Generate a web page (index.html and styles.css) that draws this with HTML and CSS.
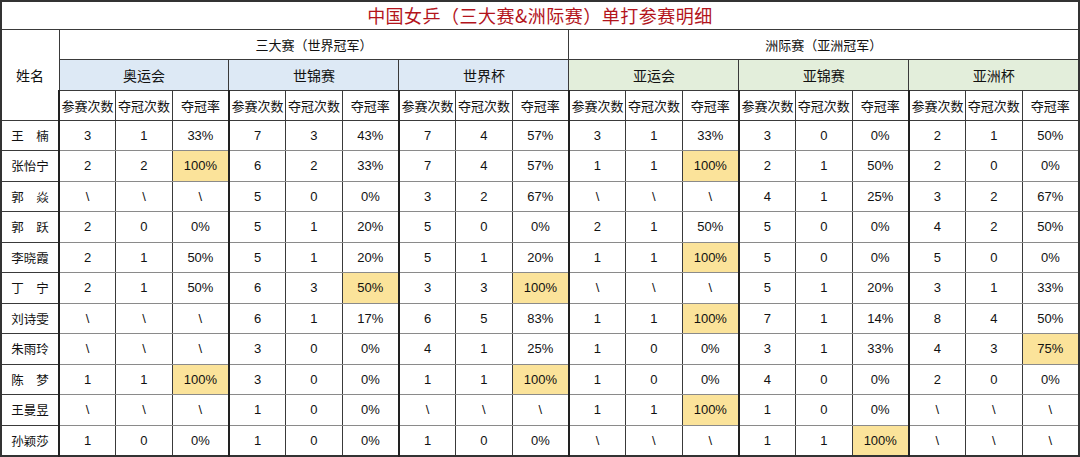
FILE: index.html
```html
<!DOCTYPE html>
<html lang="zh">
<head>
<meta charset="utf-8">
<title>中国女乒单打参赛明细</title>
<link rel="stylesheet" href="styles.css">
</head>
<body>
<table class="sheet">
  <colgroup>
    <col class="c-name">
    <col><col><col><col><col><col><col><col><col>
    <col><col><col><col><col><col><col><col><col>
  </colgroup>
  <thead>
    <tr class="r-title"><th colspan="19" class="title">中国女乒（三大赛&amp;洲际赛）单打参赛明细</th></tr>
    <tr class="r-h1">
      <th rowspan="3" class="name-h">姓名</th>
      <th colspan="9" class="g">三大赛（世界冠军）</th>
      <th colspan="9" class="g">洲际赛（亚洲冠军）</th>
    </tr>
    <tr class="r-h2">
      <th colspan="3" class="g blue">奥运会</th>
      <th colspan="3" class="g blue">世锦赛</th>
      <th colspan="3" class="g blue">世界杯</th>
      <th colspan="3" class="g green">亚运会</th>
      <th colspan="3" class="g green">亚锦赛</th>
      <th colspan="3" class="g green">亚洲杯</th>
    </tr>
    <tr class="r-h3">
      <th class="gs">参赛次数</th><th>夺冠次数</th><th>夺冠率</th>
      <th class="gs">参赛次数</th><th>夺冠次数</th><th>夺冠率</th>
      <th class="gs">参赛次数</th><th>夺冠次数</th><th>夺冠率</th>
      <th class="gs">参赛次数</th><th>夺冠次数</th><th>夺冠率</th>
      <th class="gs">参赛次数</th><th>夺冠次数</th><th>夺冠率</th>
      <th class="gs">参赛次数</th><th>夺冠次数</th><th>夺冠率</th>
    </tr>
  </thead>
  <tbody>
    <tr class="ra"><th class="name">王　楠</th>
      <td class="gs">3</td><td>1</td><td>33%</td>
      <td class="gs">7</td><td>3</td><td>43%</td>
      <td class="gs">7</td><td>4</td><td>57%</td>
      <td class="gs">3</td><td>1</td><td>33%</td>
      <td class="gs">3</td><td>0</td><td>0%</td>
      <td class="gs">2</td><td>1</td><td>50%</td></tr>
    <tr class="rb"><th class="name">张怡宁</th>
      <td class="gs">2</td><td>2</td><td class="hl">100%</td>
      <td class="gs">6</td><td>2</td><td>33%</td>
      <td class="gs">7</td><td>4</td><td>57%</td>
      <td class="gs">1</td><td>1</td><td class="hl">100%</td>
      <td class="gs">2</td><td>1</td><td>50%</td>
      <td class="gs">2</td><td>0</td><td>0%</td></tr>
    <tr class="ra"><th class="name">郭　焱</th>
      <td class="gs">\</td><td>\</td><td>\</td>
      <td class="gs">5</td><td>0</td><td>0%</td>
      <td class="gs">3</td><td>2</td><td>67%</td>
      <td class="gs">\</td><td>\</td><td>\</td>
      <td class="gs">4</td><td>1</td><td>25%</td>
      <td class="gs">3</td><td>2</td><td>67%</td></tr>
    <tr class="rb"><th class="name">郭　跃</th>
      <td class="gs">2</td><td>0</td><td>0%</td>
      <td class="gs">5</td><td>1</td><td>20%</td>
      <td class="gs">5</td><td>0</td><td>0%</td>
      <td class="gs">2</td><td>1</td><td>50%</td>
      <td class="gs">5</td><td>0</td><td>0%</td>
      <td class="gs">4</td><td>2</td><td>50%</td></tr>
    <tr class="ra"><th class="name">李晓霞</th>
      <td class="gs">2</td><td>1</td><td>50%</td>
      <td class="gs">5</td><td>1</td><td>20%</td>
      <td class="gs">5</td><td>1</td><td>20%</td>
      <td class="gs">1</td><td>1</td><td class="hl">100%</td>
      <td class="gs">5</td><td>0</td><td>0%</td>
      <td class="gs">5</td><td>0</td><td>0%</td></tr>
    <tr class="rb"><th class="name">丁　宁</th>
      <td class="gs">2</td><td>1</td><td>50%</td>
      <td class="gs">6</td><td>3</td><td class="hl">50%</td>
      <td class="gs">3</td><td>3</td><td class="hl">100%</td>
      <td class="gs">\</td><td>\</td><td>\</td>
      <td class="gs">5</td><td>1</td><td>20%</td>
      <td class="gs">3</td><td>1</td><td>33%</td></tr>
    <tr class="ra"><th class="name">刘诗雯</th>
      <td class="gs">\</td><td>\</td><td>\</td>
      <td class="gs">6</td><td>1</td><td>17%</td>
      <td class="gs">6</td><td>5</td><td>83%</td>
      <td class="gs">1</td><td>1</td><td class="hl">100%</td>
      <td class="gs">7</td><td>1</td><td>14%</td>
      <td class="gs">8</td><td>4</td><td>50%</td></tr>
    <tr class="rb"><th class="name">朱雨玲</th>
      <td class="gs">\</td><td>\</td><td>\</td>
      <td class="gs">3</td><td>0</td><td>0%</td>
      <td class="gs">4</td><td>1</td><td>25%</td>
      <td class="gs">1</td><td>0</td><td>0%</td>
      <td class="gs">3</td><td>1</td><td>33%</td>
      <td class="gs">4</td><td>3</td><td class="hl">75%</td></tr>
    <tr class="ra"><th class="name">陈　梦</th>
      <td class="gs">1</td><td>1</td><td class="hl">100%</td>
      <td class="gs">3</td><td>0</td><td>0%</td>
      <td class="gs">1</td><td>1</td><td class="hl">100%</td>
      <td class="gs">1</td><td>0</td><td>0%</td>
      <td class="gs">4</td><td>0</td><td>0%</td>
      <td class="gs">2</td><td>0</td><td>0%</td></tr>
    <tr class="rb"><th class="name">王曼昱</th>
      <td class="gs">\</td><td>\</td><td>\</td>
      <td class="gs">1</td><td>0</td><td>0%</td>
      <td class="gs">\</td><td>\</td><td>\</td>
      <td class="gs">1</td><td>1</td><td class="hl">100%</td>
      <td class="gs">1</td><td>0</td><td>0%</td>
      <td class="gs">\</td><td>\</td><td>\</td></tr>
    <tr class="rb"><th class="name">孙颖莎</th>
      <td class="gs">1</td><td>0</td><td>0%</td>
      <td class="gs">1</td><td>0</td><td>0%</td>
      <td class="gs">1</td><td>0</td><td>0%</td>
      <td class="gs">\</td><td>\</td><td>\</td>
      <td class="gs">1</td><td>1</td><td class="hl">100%</td>
      <td class="gs">\</td><td>\</td><td>\</td></tr>
  </tbody>
</table>
</body>
</html>
```

FILE: styles.css
```css
html, body {
  margin: 0;
  padding: 0;
  background: #ffffff;
}

.sheet {
  width: 1080px;
  table-layout: fixed;
  border-collapse: collapse;
  border: 2px solid #333333;
  font-family: "Liberation Sans", "Noto Sans CJK SC", sans-serif;
  font-size: 13px;
  color: #111111;
}

.c-name {
  width: 58px;
}

.sheet th,
.sheet td {
  border: 1px solid #3a3a3a;
  padding: 0;
  text-align: center;
  vertical-align: middle;
  font-weight: normal;
  white-space: nowrap;
  overflow: hidden;
}

.sheet tbody td {
  border-top: 1px solid #8a8a8a;
  border-bottom: 1px solid #8a8a8a;
}

.r-title { height: 28px; }
.r-h1 { height: 30px; }
.r-h2 { height: 31px; }
.r-h3 { height: 30px; }
.ra { height: 30px; }
.rb { height: 31px; }

.title {
  font-family: "Noto Sans CJK SC", sans-serif;
  font-size: 18px;
  color: #b3141c;
  letter-spacing: 0.5px;
  border-bottom: 1px solid #222222;
}

.name-h {
  font-family: "Noto Sans CJK SC", sans-serif;
  font-size: 14px;
  border-right: 2px solid #222222;
}

.name {
  font-family: "Noto Sans CJK SC", sans-serif;
  font-size: 12.5px;
  border-right: 2px solid #222222;
}

.g {
  font-family: "Noto Sans CJK SC", sans-serif;
  font-size: 13px;
  border-left: 2px solid #222222;
}

.r-h2 .g {
  font-size: 14px;
}

.blue {
  background: #dde9f5;
}

.green {
  background: #e3eedb;
}

.r-h3 th {
  font-family: "Noto Sans CJK SC", sans-serif;
  font-size: 13px;
}

.sheet .gs {
  border-left: 2px solid #222222;
}

.hl {
  background: #fbe39a;
}
```
